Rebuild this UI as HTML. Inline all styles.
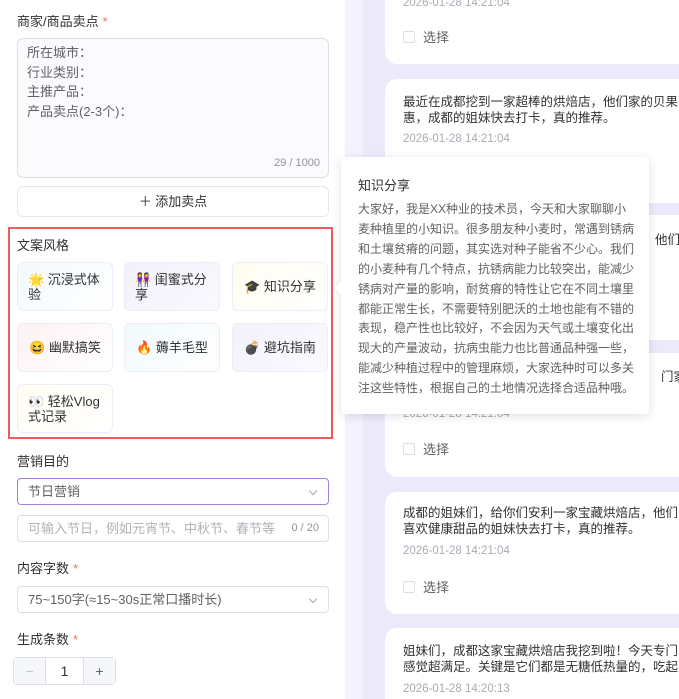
<!DOCTYPE html>
<html style="width:679px;height:699px;overflow:hidden"><head><meta charset="utf-8"><style>
*{box-sizing:border-box;margin:0;padding:0}
body{width:679px;height:699px;overflow:hidden;background:#ece9fb;font-family:"Liberation Sans","Noto Sans CJK SC",sans-serif;position:relative;color:#303133}
.left{position:absolute;left:0;top:0;width:345px;height:699px;background:#fff}
.strip{position:absolute;left:345px;top:0;width:18px;height:699px;background:#f4f2fd}
.lbl{position:absolute;left:17px;font-size:13px;color:#303133}
.lbl i{color:#f56c6c;font-style:normal;margin-left:4px}
.ta{position:absolute;left:17px;top:38px;width:312px;height:140px;border:1px solid #dcdfe6;border-radius:6px;background:#fbfbfd;padding:4px 9px;font-size:13px;line-height:19.5px;color:#606266}
.ta .cnt{position:absolute;right:8px;bottom:4px;font-size:11px;color:#909399}
.btn{position:absolute;left:17px;top:186px;width:312px;height:31px;border:1px solid #e4e7ed;border-radius:6px;text-align:center;line-height:29px;font-size:13px;color:#303133}
.red{position:absolute;left:8px;top:227px;width:325px;height:212px;border:2px solid #ee5a5a}
.st{position:absolute;width:96px;height:49px;border:1px solid #ebeef5;border-radius:6px;font-size:13px;line-height:15px;display:flex;align-items:center;padding:0 10px;color:#303133}
.st.c{justify-content:center}
.sel{position:absolute;left:17px;width:312px;height:27px;border:1px solid #dcdfe6;border-radius:4px;font-size:13px;line-height:25px;padding-left:10px;color:#606266}
.sel .ar{position:absolute;right:12px;top:9px;width:6px;height:6px;border-right:1px solid #aaa;border-bottom:1px solid #aaa;transform:rotate(45deg)}
.num{position:absolute;left:13px;top:657px;width:103px;height:28px;border:1px solid #dcdfe6;border-radius:4px;display:flex;font-size:14px;line-height:26px}
.card{position:absolute;left:385px;width:320px;background:#fff;border-radius:12px}
.ct{position:absolute;left:18px;font-size:12.5px;line-height:16px;color:#303133;white-space:nowrap}
.dt{position:absolute;left:18px;font-size:11.5px;color:#a8abb2}
.ck{position:absolute;left:18px;font-size:13px;color:#606266;display:flex;align-items:center}
.ck b{display:inline-block;width:12px;height:12px;border:1px solid #dcdfe6;border-radius:2px;margin-right:8px}
.tip{position:absolute;left:341px;top:157px;width:308px;height:257px;background:#fff;border-radius:4px;box-shadow:0 2px 10px rgba(0,0,0,.12);padding:18px 17px}
.tip h4{font-weight:normal;font-size:13px;color:#303133;margin-bottom:6px}
.tip p{font-size:12px;line-height:19.9px;color:#606266;white-space:nowrap}
.tip:before{content:"";position:absolute;left:-5px;top:126px;width:9px;height:9px;background:#fff;transform:rotate(45deg);box-shadow:-1px 1px 2px rgba(0,0,0,.06)}
</style></head><body>
<div class="left"></div><div class="strip"></div>
<div class="card" style="top:-40px;height:104px"><div class="dt" style="top:37px">2026-01-28 14:21:04</div><div class="ck" style="top:67px"><b></b>选择</div></div>
<div class="card" style="top:79px;height:124px"><div class="ct" style="top:15px">最近在成都挖到一家超棒的烘焙店，他们家的贝果<br>惠，成都的姐妹快去打卡，真的推荐。</div><div class="dt" style="top:54px">2026-01-28 14:21:04</div></div>
<div class="card" style="top:215px;height:125px"><div class="ct" style="top:17px;left:270px">他们</div></div>
<div class="card" style="top:353px;height:124px"><div class="ct" style="top:16px;left:276px">门家的</div><div class="dt" style="top:55px">2026-01-28 14:21:04</div><div class="ck" style="top:86px"><b></b>选择</div></div>
<div class="card" style="top:492px;height:122px"><div class="ct" style="top:13px">成都的姐妹们，给你们安利一家宝藏烘焙店，他们<br>喜欢健康甜品的姐妹快去打卡，真的推荐。</div><div class="dt" style="top:53px">2026-01-28 14:21:04</div><div class="ck" style="top:85px"><b></b>选择</div></div>
<div class="card" style="top:628px;height:100px"><div class="ct" style="top:15px">姐妹们，成都这家宝藏烘焙店我挖到啦！今天专门<br>感觉超满足。关键是它们都是无糖低热量的，吃起</div><div class="dt" style="top:55px">2026-01-28 14:20:13</div></div>

<div class="lbl" style="top:11px">商家/商品卖点<i>*</i></div>
<div class="ta">所在城市：<br>行业类别：<br>主推产品：<br>产品卖点(2-3个)：<div class="cnt">29 / 1000</div></div>
<div class="btn">＋ 添加卖点</div>
<div class="red"></div>
<div class="lbl" style="top:235px">文案风格</div>
<div class="st" style="left:17px;top:262px;background:linear-gradient(135deg,#f3f9fc,#fff)">🌟 沉浸式体验</div>
<div class="st" style="left:124px;top:262px;background:linear-gradient(135deg,#f3f0fb,#fbf9fe)">👭 闺蜜式分享</div>
<div class="st c" style="left:232px;top:262px;background:linear-gradient(135deg,#fffdf1,#fff)">🎓 知识分享</div>
<div class="st c" style="left:17px;top:323px;background:linear-gradient(135deg,#fdf1f3,#fff)">😆 幽默搞笑</div>
<div class="st c" style="left:124px;top:323px;background:linear-gradient(135deg,#f1f9fc,#fff)">🔥 薅羊毛型</div>
<div class="st c" style="left:232px;top:323px;background:linear-gradient(135deg,#f3f1fb,#fbfaff)">💣 避坑指南</div>
<div class="st" style="left:17px;top:384px;background:linear-gradient(135deg,#fffdf3,#fff)">👀 轻松Vlog式记录</div>
<div class="lbl" style="top:451px">营销目的</div>
<div class="sel" style="top:478px;border-color:#9f7fd9">节日营销<span class="ar"></span></div>
<div class="sel" style="top:515px;color:#b0b3b8">可输入节日，例如元宵节、中秋节、春节等<span style="position:absolute;right:9px;font-size:11px;color:#909399">0 / 20</span></div>
<div class="lbl" style="top:558px">内容字数<i>*</i></div>
<div class="sel" style="top:586px">75~150字(≈15~30s正常口播时长)<span class="ar"></span></div>
<div class="lbl" style="top:629px">生成条数<i>*</i></div>
<div class="num"><span style="width:32px;background:#f5f7fa;color:#c0c4cc;text-align:center;border-right:1px solid #dcdfe6">−</span><span style="flex:1;text-align:center">1</span><span style="width:32px;background:#f5f7fa;color:#606266;text-align:center;border-left:1px solid #dcdfe6">+</span></div>

<div class="tip"><h4>知识分享</h4><p>大家好，我是XX种业的技术员，今天和大家聊聊小<br>麦种植里的小知识。很多朋友种小麦时，常遇到锈病<br>和土壤贫瘠的问题，其实选对种子能省不少心。我们<br>的小麦种有几个特点，抗锈病能力比较突出，能减少<br>锈病对产量的影响，耐贫瘠的特性让它在不同土壤里<br>都能正常生长，不需要特别肥沃的土地也能有不错的<br>表现，稳产性也比较好，不会因为天气或土壤变化出<br>现大的产量波动，抗病虫能力也比普通品种强一些，<br>能减少种植过程中的管理麻烦，大家选种时可以多关<br>注这些特性，根据自己的土地情况选择合适品种哦。</p></div>
</body></html>
